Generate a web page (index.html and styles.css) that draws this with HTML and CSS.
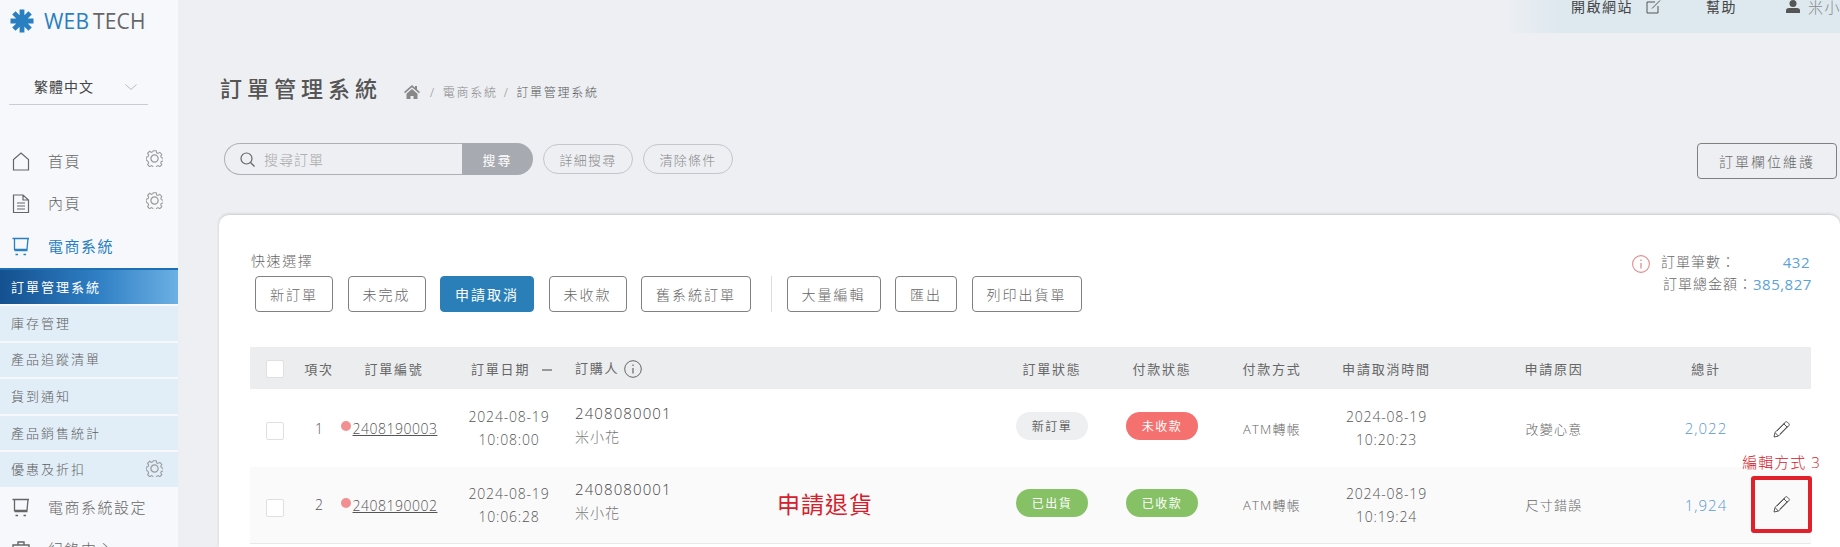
FILE: index.html
```html
<!DOCTYPE html>
<html lang="zh-Hant">
<head>
<meta charset="utf-8">
<title>訂單管理系統</title>
<link rel="stylesheet" href="styles.css">
</head>
<body>
<svg class="defs" width="0" height="0" aria-hidden="true">
  <symbol id="gear" viewBox="0 0 16 16">
    <path d="M6.6 1h2.8l.4 1.9 1.3.6 1.7-1 1.9 2-1 1.6.5 1.4 1.8.5v2.6l-1.8.5-.5 1.4 1 1.6-1.9 1.9-1.7-1-1.3.6-.4 1.9H6.6l-.4-1.9-1.3-.6-1.7 1-1.9-1.9 1-1.6-.5-1.4L0 9.6V7l1.8-.5.5-1.4-1-1.6 1.9-2 1.7 1 1.3-.6z" transform="translate(.2 -.3)" fill="none" stroke="#9a9a9a"/>
    <circle cx="8" cy="8" r="3.4" fill="none" stroke="#9a9a9a" stroke-width="1.2"/>
  </symbol>
  <symbol id="cart" viewBox="0 0 18 19">
    <path d="M.5 1.5h16.500M2.500 1.500v11h12.500l1-11M2.500 13.500h13" fill="none" stroke="currentColor" stroke-width="1.300"/>
    <path d="M3.500 17.500h2.500M11.500 17.500h2.500" fill="none" stroke="currentColor" stroke-width="1.600"/>
  </symbol>
  <symbol id="pencil" viewBox="0 0 17 17">
    <path d="M12.300 1.200a1.500 1.500 0 0 1 2.100 0l1.400 1.400a1.500 1.500 0 0 1 0 2.100L5.600 15 1 16l1-4.600zM10.800 2.800l3.400 3.400M2.200 11.800l3.200 3.200M4 10l7.800-7.800M6.900 13l7.800-7.800" fill="none" stroke="#555" stroke-width="1"/>
  </symbol>
</svg>
<div class="app">
  <aside class="side">
    <div class="logo">
      <svg class="logo-mark" viewBox="0 0 24 24" aria-hidden="true">
        <g stroke="#2a7fc1" stroke-width="4.800">
          <path d="M12 .5v23M.5 12h23M3.900 3.900l16.200 16.200M20.100 3.900 3.900 20.100"/>
        </g>
      </svg>
      <span class="logo-text"><span class="logo-web">WEB</span> TECH</span>
    </div>
    <div class="lang">
      <span>繁體中文</span>
      <svg class="chev" viewBox="0 0 12 6" aria-hidden="true"><path d="M.5.500 6 5.500 11.500.500" fill="none" stroke="#b5b9c0"/></svg>
    </div>
    <nav class="menu">
      <a class="menu-item">
        <svg class="mi" viewBox="0 0 18 19" aria-hidden="true"><path d="M1.500 18V7.500L9 1l7.500 6.500V18z" fill="none" stroke="#666" stroke-width="1.200"/></svg>
        <span class="mt">首頁</span>
        <svg class="gear gear-up"><use href="#gear"/></svg>
      </a>
      <a class="menu-item">
        <svg class="mi" viewBox="0 0 18 19" aria-hidden="true"><path d="M1.500 1h9.500l5.500 5v12.500h-15zM11 1v5h5.500M5 9h8M5 12h8M5 15h8" fill="none" stroke="#666" stroke-width="1.200"/></svg>
        <span class="mt">內頁</span>
        <svg class="gear gear-up"><use href="#gear"/></svg>
      </a>
      <a class="menu-item menu-current">
        <svg class="mi"><use href="#cart"/></svg>
        <span class="mt">電商系統</span>
      </a>
      <ul class="sub">
        <li class="sub-item sub-active">訂單管理系統</li>
        <li class="sub-item">庫存管理</li>
        <li class="sub-item">產品追蹤清單</li>
        <li class="sub-item">貨到通知</li>
        <li class="sub-item">產品銷售統計</li>
        <li class="sub-item">優惠及折扣<svg class="gear"><use href="#gear"/></svg></li>
      </ul>
      <a class="menu-item">
        <svg class="mi"><use href="#cart"/></svg>
        <span class="mt">電商系統設定</span>
      </a>
      <a class="menu-item">
        <svg class="mi" viewBox="0 0 18 19" aria-hidden="true"><path d="M1 5h16v13H1zM6 5V2h6v3" fill="none" stroke="#666" stroke-width="1.400"/></svg>
        <span class="mt">紀錄中心</span>
      </a>
    </nav>
  </aside>

  <main class="main">
    <div class="topbar">
      <div class="topnav">
        <a class="tn-open">開啟網站</a>
        <svg class="tn-ico" viewBox="0 0 15 14" aria-hidden="true"><path d="M9 2H1v11h11V6M6 8.500 14 .5" fill="none" stroke="#555" stroke-width="1"/></svg>
        <a class="tn-help">幫助</a>
        <svg class="tn-user" viewBox="0 0 14 13" aria-hidden="true"><circle cx="7" cy="3.500" r="3.500" fill="#555"/><path d="M0 13v-2.500Q0 8 3 8h8q3 0 3 2.500V13z" fill="#555"/></svg>
        <span class="tn-name">米小花</span>
      </div>
    </div>

    <div class="title-row">
      <h1 class="title">訂單管理系統</h1>
      <div class="crumbs">
        <svg class="home" viewBox="0 0 16 14" aria-hidden="true"><path d="M8 0 0 7l1 1.200L8 2.200l7 6L16 7l-3-2.600V1h-2v1.700zM2.500 8.800V14h4v-3h3v3h4V8.800L8 4z" fill="#888"/></svg>
        <span class="crumb-sep">/</span>
        <span class="crumb">電商系統</span>
        <span class="crumb-sep">/</span>
        <span class="crumb crumb-now">訂單管理系統</span>
      </div>
    </div>

    <div class="search-row">
      <div class="search">
        <div class="search-input">
          <svg class="search-ico" viewBox="0 0 15 15" aria-hidden="true"><circle cx="6.500" cy="6.500" r="5.500" fill="none" stroke="#666" stroke-width="1.200"/><path d="m10.500 10.500 4 4" stroke="#666" stroke-width="1.200"/></svg>
          <span class="placeholder">搜尋訂單</span>
        </div>
        <button class="search-btn">搜尋</button>
      </div>
      <button class="pill">詳細搜尋</button>
      <button class="pill">清除條件</button>
      <button class="col-btn">訂單欄位維護</button>
    </div>

    <section class="card">
      <div class="card-head">
        <div>
          <div class="quick-label">快速選擇</div>
          <div class="toolbar">
            <button class="btn">新訂單</button>
            <button class="btn">未完成</button>
            <button class="btn btn-on">申請取消</button>
            <button class="btn">未收款</button>
            <button class="btn">舊系統訂單</button>
            <span class="divider"></span>
            <button class="btn">大量編輯</button>
            <button class="btn">匯出</button>
            <button class="btn">列印出貨單</button>
          </div>
        </div>
        <div class="stats">
          <svg class="stats-ico" viewBox="0 0 18 18" aria-hidden="true"><circle cx="9" cy="9" r="8.400" fill="none" stroke="#e58a8a" stroke-width="1.100"/><path d="M9 8v5.500M9 4.500v1.500" stroke="#e58a8a" stroke-width="1.300"/></svg>
          <div class="stats-body">
            <div class="stat"><span>訂單筆數：</span><span class="num">432</span></div>
            <div class="stat stat-2"><span>訂單總金額：</span><span class="num">385,827</span></div>
          </div>
        </div>
      </div>

      <table class="orders">
        <colgroup>
          <col class="c1"><col class="c2"><col class="c3"><col class="c4"><col class="c5"><col class="c6">
          <col class="c7"><col class="c8"><col class="c9"><col class="c10"><col class="c11"><col class="c12">
        </colgroup>
        <thead>
          <tr>
            <th><span class="check"></span></th>
            <th>項次</th>
            <th>訂單編號</th>
            <th class="th-date">訂單日期<span class="sort"></span></th>
            <th class="th-buyer">訂購人<svg class="th-info" viewBox="0 0 18 18" aria-hidden="true"><circle cx="9" cy="9" r="8.300" fill="none" stroke="#666" stroke-width="1"/><path d="M9 8v5.500M9 4.500V6" stroke="#666" stroke-width="1.200"/></svg></th>
            <th>訂單狀態</th>
            <th>付款狀態</th>
            <th>付款方式</th>
            <th>申請取消時間</th>
            <th class="cell-reason">申請原因</th>
            <th>總計</th>
            <th></th>
          </tr>
        </thead>
        <tbody>
          <tr class="row-1">
            <td><span class="check check-row"></span></td>
            <td class="num-cell">1</td>
            <td class="no-cell"><span class="dot"></span><a class="order-no">2408190003</a></td>
            <td class="dt">2024-08-19<br>10:08:00</td>
            <td class="buyer"><div class="buyer-id">2408080001</div><div class="buyer-name">米小花</div></td>
            <td><span class="badge badge-grey">新訂單</span></td>
            <td><span class="badge badge-red">未收款</span></td>
            <td class="plain">ATM轉帳</td>
            <td class="dt">2024-08-19<br>10:20:23</td>
            <td class="plain cell-reason">改變心意</td>
            <td class="total">2,022</td>
            <td><svg class="pencil"><use href="#pencil"/></svg></td>
          </tr>
          <tr class="row-2">
            <td><span class="check check-row"></span></td>
            <td class="num-cell">2</td>
            <td class="no-cell"><span class="dot"></span><a class="order-no">2408190002</a></td>
            <td class="dt">2024-08-19<br>10:06:28</td>
            <td class="buyer">
              <div class="buyer-id">2408080001</div><div class="buyer-name">米小花</div>
              <span class="note-return">申請退貨</span>
            </td>
            <td><span class="badge badge-green">已出貨</span></td>
            <td><span class="badge badge-green">已收款</span></td>
            <td class="plain">ATM轉帳</td>
            <td class="dt">2024-08-19<br>10:19:24</td>
            <td class="plain cell-reason">尺寸錯誤</td>
            <td class="total">1,924</td>
            <td>
              <div class="edit-box">
                <span class="note-edit">編輯方式 3</span>
                <svg class="pencil"><use href="#pencil"/></svg>
              </div>
            </td>
          </tr>
        </tbody>
      </table>
    </section>
  </main>
</div>
</body>
</html>
```

FILE: styles.css
```css
* { box-sizing: border-box; }
html, body { margin: 0; height: 547px; overflow: hidden; }
body {
  font-family: "Open Sans", "Noto Sans CJK TC", sans-serif;
  font-weight: 300;
  color: #555;
  background: #edeff3;
}
.defs { position: absolute; }
button { font-family: inherit; font-weight: inherit; cursor: pointer; }
ul { list-style: none; margin: 0; padding: 0; }

.app { display: flex; height: 547px; overflow: hidden; }

/* Sidebar */
.side { width: 178px; flex: none; background: #f6f8fb; }
.logo { display: flex; align-items: center; height: 42px; padding-left: 10px; gap: 10px; }
.logo-mark { width: 24px; height: 24px; }
.logo-text { font-size: 21px; font-weight: 400; color: #666; letter-spacing: .2px; word-spacing: -2px; white-space: nowrap; }
.logo-web { color: #2a7fc1; }
.lang {
  display: flex; align-items: center; justify-content: space-between;
  width: 139px; height: 35px; margin: 28px 0 0 9px; padding: 0 11px 0 25px;
  border-bottom: 1px solid #c9ccd4;
  font-size: 14px; letter-spacing: 1px; color: #444; font-weight: 400;
}
.lang span { margin-bottom: 3px; }
.chev { width: 12px; height: 6px; }
.menu { margin-top: 35px; display: block; }
.menu-item {
  display: flex; align-items: center; height: 42px; padding: 0 15px 0 12px;
  font-size: 15px; letter-spacing: 1.500px; color: #666;
}
.menu-item .mi { width: 18px; height: 19px; margin-right: 18px; flex: none; color: #666; }
.mt { margin-bottom: 2px; }
.menu-item .gear { margin-left: auto; }
.menu-current { height: 44px; color: #2a7fc1; font-weight: 400; }
.menu-current .mi { color: #2a7fc1; }
.gear { width: 17px; height: 17px; flex: none; }
.gear-up { margin-bottom: 6px; }
.sub { display: flex; flex-direction: column; gap: 2px; }
.sub-item {
  display: flex; align-items: center; height: 34.600px; padding: 0 15px 2px 11px;
  background: #e1eef8;
  font-size: 13px; letter-spacing: 2px; color: #606060;
}
.sub-item .gear { margin-left: auto; }
.sub-active {
  height: 36px;
  border-top: 2px solid #1f6fb5;
  background: linear-gradient(90deg, #14508f, #2f7fc4 55%, #6cb0e4);
  color: #fff; font-weight: 400;
}

/* Main */
.main { flex: 1; min-width: 0; display: flex; flex-direction: column; }
.topbar { display: flex; justify-content: flex-end; height: 33px; flex: none; }
.topnav {
  width: 335px; height: 33px; display: flex; align-items: flex-start; overflow: hidden;
  padding-left: 66px;
  background: linear-gradient(90deg, rgba(221,232,239,0), #dde8ef 17%);
  font-size: 14px; line-height: 14px; letter-spacing: 1.500px; color: #444; font-weight: 400;
  white-space: nowrap;
}
.tn-ico { width: 15px; height: 14px; margin-left: 13px; flex: none; }
.tn-help { margin-left: 45px; }
.tn-user { width: 14px; height: 13px; margin-left: 49px; flex: none; }
.tn-name { margin-left: 8px; font-size: 15px; color: #888; font-weight: 300; }

.title-row { display: flex; align-items: center; height: 30px; margin: 40px 0 0 42px; flex: none; }
.title { margin: 0; font-size: 22px; line-height: 30px; font-weight: 500; letter-spacing: 5px; color: #555; }
.crumbs { display: flex; align-items: center; margin: 8px 0 0 22px; font-size: 12px; letter-spacing: 1.700px; color: #888; }
.home { width: 16px; height: 14px; margin-right: 10px; }
.crumb-sep { margin-right: 7px; }
.crumb { margin-right: 6px; }
.crumb-now { color: #555; }

.search-row { display: flex; align-items: flex-start; margin: 40px 3px 0 46px; flex: none; }
.search { display: flex; width: 309px; height: 32px; }
.search-input {
  flex: 1; display: flex; align-items: center; padding-left: 15px;
  border: 1px solid #aeb0b6; border-right: 0; border-radius: 16px 0 0 16px;
}
.search-ico { width: 15px; height: 15px; margin-right: 9px; }
.placeholder { font-size: 14px; letter-spacing: 1px; color: #a5a5a5; }
.search-btn {
  width: 71px; height: 32px; border: 0; border-radius: 0 16px 16px 0;
  background: #a7aab1; color: #fff; font-size: 13px; letter-spacing: 2px; font-weight: 400; padding: 0;
}
.pill {
  width: 90px; height: 30px; margin: 1px 0 0 10px; padding: 0;
  border: 1px solid #c4c6cb; border-radius: 15px; background: transparent;
  font-size: 13px; letter-spacing: 1.300px; color: #888;
}
.col-btn {
  width: 140px; height: 36px; margin-left: auto; padding: 0;
  border: 1px solid #808080; border-radius: 4px; background: transparent;
  font-size: 14px; letter-spacing: 2px; color: #666;
}

.card {
  flex: 1; min-height: 0; margin: 36px 0 0 41px; padding: 36px 29px 0 31px;
  background: #fff; border-radius: 10px 10px 0 0;
  box-shadow: 0 -1px 3px rgba(0,0,0,.16);
}
.card-head { display: flex; justify-content: space-between; align-items: flex-start; }
.quick-label { margin-left: 1px; font-size: 14px; line-height: 20px; letter-spacing: 1.600px; color: #666; }
.toolbar { display: flex; gap: 14.500px; margin: 5px 0 0 5px; }
.btn {
  height: 36px; padding: 0 14px; border: 1px solid #808080; border-radius: 4px; background: #fff;
  font-size: 14px; letter-spacing: 2px; color: #666; white-space: nowrap;
}
.btn-on { border-color: #2a7fb9; background: #2a7fb9; color: #fff; font-weight: 400; }
.divider { width: 1px; height: 36px; margin-left: 5.500px; background: #dcdcdc; }

.stats { display: flex; align-items: flex-start; gap: 11px; margin-right: 1px; }
.stats-ico { width: 18px; height: 18px; margin-top: 4px; }
.stats-body { width: 149px; }
.stat { display: flex; justify-content: space-between; font-size: 14px; line-height: 22px; letter-spacing: 1px; color: #666; white-space: nowrap; }
.stat-2 { padding-left: 2px; }
.num { font-size: 15px; color: #5aa3d8; letter-spacing: .5px; font-weight: 400; }

.orders { width: 1561px; margin-top: 35px; border-collapse: collapse; table-layout: fixed; }
.c1 { width: 50px; } .c2 { width: 38px; } .c3 { width: 112px; } .c4 { width: 118px; }
.c5 { width: 424px; } .c6 { width: 120px; } .c7 { width: 100px; } .c8 { width: 120px; }
.c9 { width: 109px; } .c10 { width: 220px; } .c11 { width: 90px; } .c12 { width: 60px; }
th, td { padding: 0; text-align: center; vertical-align: middle; }
thead tr { height: 42px; background: #ebedef; }
th { font-size: 13px; font-weight: 400; letter-spacing: 1.800px; color: #666; white-space: nowrap; }
.th-date { text-align: left; padding-left: 21px; }
.th-buyer, .buyer { text-align: left; padding-left: 7px; }
.sort { display: inline-block; width: 10px; height: 2px; margin-left: 12px; vertical-align: middle; background: #999; }
.th-info { width: 18px; height: 18px; margin-left: 5px; vertical-align: middle; }
.cell-reason { padding-left: 6px; }
.check { display: inline-block; width: 18px; height: 18px; vertical-align: middle; border: 1px solid #e0e0e0; border-radius: 2px; background: #fff; }
.check-row { margin-top: 4px; }
.row-1 { height: 78px; }
.row-2 { height: 76px; background: #fafafa; border-bottom: 1px solid #e8e8e8; }
.num-cell { font-size: 14px; color: #555; }
.no-cell { padding-right: 10px; }
.dot { display: inline-block; width: 10px; height: 10px; margin-right: 2px; border-radius: 50%; background: #f28f92; vertical-align: 3px; }
.order-no { font-size: 14px; letter-spacing: .5px; color: #555; text-decoration: underline; }
.dt { font-size: 14px; line-height: 23px; letter-spacing: .8px; color: #555; }
.buyer { position: relative; padding-bottom: 8px; }
.buyer-id { font-size: 15px; line-height: 24px; letter-spacing: 1.100px; color: #444; }
.buyer-name { font-size: 14px; line-height: 23px; letter-spacing: 1px; color: #777; }
.note-return {
  position: absolute; left: 209px; top: 22px;
  font-size: 23px; line-height: 30px; letter-spacing: 1px; font-weight: 400; color: #d4202a;
}
.badge {
  display: inline-flex; align-items: center; justify-content: center;
  width: 72px; height: 28px; margin-bottom: 4px; border-radius: 14px;
  font-size: 12px; letter-spacing: 1.500px; font-weight: 400;
}
.badge-grey { background: #eeeff1; color: #666; }
.badge-red { background: #f4716f; color: #fff; }
.badge-green { background: #87c166; color: #fff; }
.plain { font-size: 13px; letter-spacing: 1.200px; color: #666; }
.total { font-size: 15px; letter-spacing: 1px; color: #5b98d3; }
.pencil { width: 17px; height: 17px; display: inline-block; vertical-align: middle; }
.edit-box {
  position: relative; display: flex; align-items: center; justify-content: center;
  width: 61px; height: 57px; border: 4px solid #e1202c; border-radius: 3px;
}
.note-edit {
  position: absolute; left: 50%; bottom: 100%; transform: translateX(-50%); margin-bottom: 9px;
  font-size: 15px; line-height: 18px; letter-spacing: 1px; color: #d4202a; white-space: nowrap; font-weight: 300;
}
```
